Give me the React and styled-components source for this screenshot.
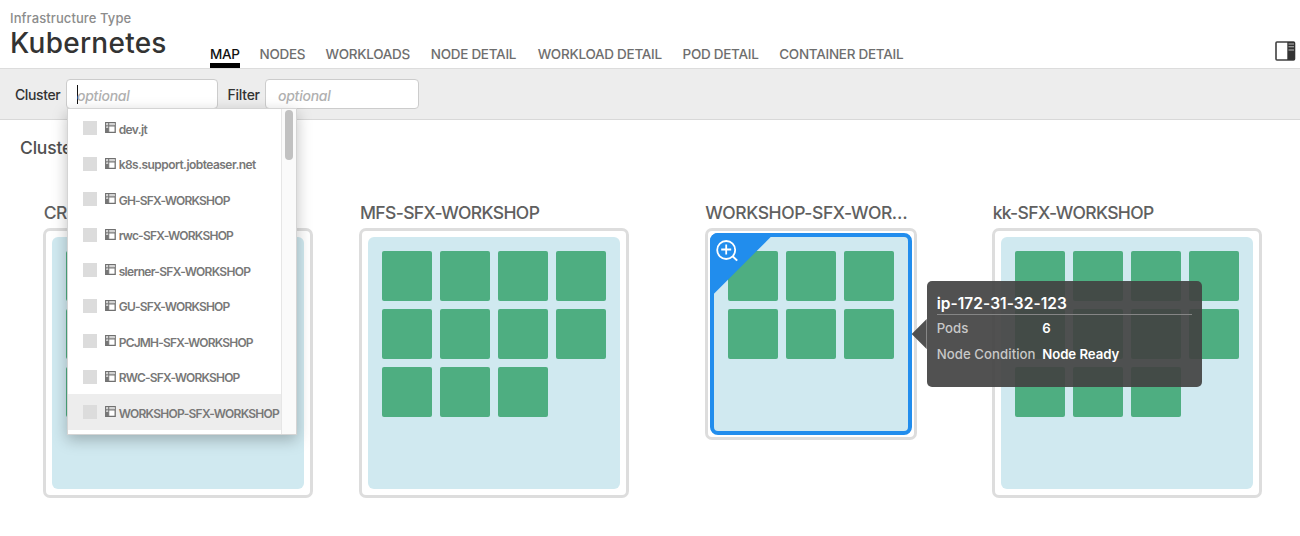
import React from "react";
import styled, { createGlobalStyle } from "styled-components";

const GlobalStyle = createGlobalStyle`
  * { box-sizing: border-box; }
  body {
    margin: 0;
    background: #fff;
    color: #333;
    font-family: Inter, "Liberation Sans", sans-serif;
    overflow: hidden;
  }
`;

const Page = styled.div`
  height: 536px;
  overflow: hidden;
`;

const Header = styled.header`
  display: flex;
  height: 69px;
  border-bottom: 1px solid #dcdcdc;
`;

const TitleBlock = styled.div`
  width: 210px;
  padding: 10px 0 0 10px;
`;

const Overline = styled.div`
  font-size: 13px;
  line-height: 16px;
  font-weight: 500;
  letter-spacing: 0.1px;
  color: #8c8c8c;
`;

const Title = styled.h1`
  margin: 0;
  font-size: 28px;
  line-height: 34px;
  font-weight: 500;
  letter-spacing: 0.25px;
  color: #333;
`;

const Tabs = styled.nav`
  display: flex;
  flex: 1;
  align-items: flex-end;
  gap: 20px;
  margin-right: -1px;
`;

const Tab = styled.a`
  width: ${(p) => p.$width}px;
  height: 24px;
  white-space: nowrap;
  font-size: 13.5px;
  line-height: 20px;
  font-weight: 500;
  letter-spacing: -0.27px;
  color: ${(p) => (p.$active ? "#111" : "#6e6e6e")};
  border-bottom: 5px solid ${(p) => (p.$active ? "#000" : "transparent")};
`;

const PanelButton = styled.button`
  align-self: flex-start;
  margin: 41px 4px 0 0;
  padding: 0;
  border: 0;
  background: none;
  line-height: 0;
`;

const FilterBar = styled.div`
  display: flex;
  align-items: center;
  height: 51px;
  padding-left: 15px;
  background: #ededed;
  border-bottom: 1px solid #d8d8d8;
`;

const Label = styled.label`
  width: ${(p) => p.$width}px;
  font-size: 14px;
  line-height: 20px;
  font-weight: 500;
  letter-spacing: ${(p) => p.$track}px;
  padding: 2px 0 0 ${(p) => p.$indent || 0}px;
`;

const Field = styled.div`
  position: relative;
  display: flex;
  align-items: center;
  width: ${(p) => p.$width}px;
  height: 30px;
  margin: 0 ${(p) => p.$after || 0}px 1px 0;
  padding: 3px 0 0 ${(p) => p.$indent}px;
  background: #fff;
  border: 1px solid #ccc;
  border-radius: 4px;
  font-size: 14px;
  font-style: italic;
  font-weight: 500;
  letter-spacing: -0.25px;
  color: #b0b0b0;
`;

const Caret = styled.span`
  width: 1px;
  height: 19px;
  margin: -2px -1px 0 0;
  background: #111;
`;

const Menu = styled.div`
  position: absolute;
  z-index: 2;
  top: 28px;
  left: 0;
  display: flex;
  width: 230px;
  height: 327px;
  overflow: hidden;
  background: #fff;
  border: 1px solid #d4d4d4;
  font-style: normal;
  box-shadow: 0 5px 14px rgba(0, 0, 0, 0.25);
`;

const MenuList = styled.div`
  flex: 1;
  min-width: 0;
  padding-top: 1.9px;
`;

const MenuRow = styled.div`
  display: flex;
  align-items: center;
  height: 35.5px;
  padding-left: 15px;
  background: ${(p) => (p.$active ? "#ededed" : "transparent")};
  white-space: nowrap;
  font-size: 12px;
  font-weight: 600;
  letter-spacing: ${(p) => p.$track}px;
  color: #787878;

  svg {
    flex: none;
    margin-top: -1px;
  }
`;

const Checkbox = styled.span`
  flex: none;
  width: 14px;
  height: 14px;
  margin-right: 8px;
  background: #dcdcdc;
`;

const RowText = styled.span`
  margin-left: 2.7px;
  padding-top: 2px;
`;

const ScrollTrack = styled.div`
  flex: none;
  width: 15px;
  padding: 1px 3px;
  background: #fafafa;
  border-left: 1px solid #e6e6e6;
`;

const ScrollThumb = styled.div`
  width: 8px;
  height: 50px;
  border-radius: 4px;
  background: #c1c1c1;
`;

const Heading = styled.h2`
  margin: 0;
  padding: 17px 0 0 20px;
  font-size: 17.5px;
  line-height: 22px;
  font-weight: 500;
  letter-spacing: -0.2px;
  color: #505050;
`;

const Map = styled.main`
  display: flex;
  justify-content: space-between;
  align-items: flex-start;
  padding: 43px 38px 0 43px;
`;

const Cluster = styled.section`
  display: flex;
  justify-content: center;
  width: 270px;
`;

const ClusterBody = styled.div`
  width: ${(p) => p.$cols * 58 + 38}px;
`;

const ClusterName = styled.h3`
  margin: 0 0 4px;
  padding-left: 0.7px;
  overflow: hidden;
  white-space: nowrap;
  font-size: 17.5px;
  line-height: 22px;
  font-weight: 500;
  letter-spacing: ${(p) => (p.$truncated ? -0.42 : -0.63)}px;
  color: #606060;
`;

const Frame = styled.div`
  padding: ${(p) => (p.$selected ? 2 : 6)}px;
  border: 3px solid #ddd;
  border-radius: 7px;
`;

const Node = styled.div`
  position: relative;
  display: grid;
  grid-template-columns: repeat(${(p) => p.$cols}, 50px);
  grid-auto-rows: 50px;
  gap: 8px;
  height: ${(p) => p.$cols * 58 + 20 + (p.$selected ? 8 : 0)}px;
  padding: 14px;
  border: ${(p) => (p.$selected ? 4 : 0)}px solid #218ded;
  border-radius: ${(p) => (p.$selected ? 8 : 6)}px;
  background: #d0e9f0;
`;

const Pod = styled.div`
  border-radius: 2px;
  background: #4eae81;
`;

const ZoomCorner = styled.div`
  position: absolute;
  top: -4px;
  left: -4px;
  width: 65px;
  height: 65px;
  padding: 6px;
  border-top-left-radius: 8px;
  background: #218ded;
  clip-path: polygon(0 0, 100% 0, 0 100%);
`;

const Tooltip = styled.aside`
  position: absolute;
  z-index: 3;
  top: 44px;
  left: 213px;
  width: 275px;
  height: 106px;
  padding: 13px 10px;
  border-radius: 5px;
  background: rgba(66, 66, 66, 0.92);
  color: #fff;

  &::before {
    content: "";
    position: absolute;
    top: 38px;
    right: 100%;
    width: 15px;
    height: 30px;
    background: inherit;
    clip-path: polygon(100% 0, 100% 100%, 0 50%);
  }
`;

const TooltipTitle = styled.div`
  height: 21px;
  font-size: 15.5px;
  line-height: 19px;
  font-weight: 600;
  letter-spacing: 0.05px;
  border-bottom: 1px solid #858585;
`;

const Facts = styled.dl`
  display: grid;
  grid-template-columns: 105.5px 1fr;
  grid-auto-rows: 26px;
  margin: 0;
  font-size: 13.2px;
  line-height: 26px;
  white-space: nowrap;

  dt { color: #c8c8c8; font-weight: 500; letter-spacing: 0.06px; }
  dd { margin: 0; font-weight: 600; letter-spacing: -0.03px; }
`;

const TableIcon = () => (
  <svg width="11" height="11" viewBox="0 0 11 11" fill="none">
    <path d="M.7 .7H10.2V10.3H.7Z" fill="#fff" stroke="#707070" strokeWidth="1.3" />
    <path d="M1 1.3H10V3.3H1Z" fill="#d2d2d2" />
    <path d="M1 6H3.5V10H1Z" fill="#777" />
    <path d="M1 3.9H10M3.7 1V10" stroke="#777" strokeWidth="1.1" />
    <path d="M1.4 5.2H3.1" stroke="#c4c4c4" strokeWidth="1.2" />
  </svg>
);

const PanelIcon = () => (
  <svg width="21" height="20" viewBox="0 0 21 20" fill="none">
    <rect x="1" y="1" width="18.5" height="18" rx="1" fill="#fff" stroke="#404040" strokeWidth="1.6" />
    <path d="M12.3 1H20V19H12.3Z" fill="#333" />
    <path d="M13.5 3H19M13.5 5.7H19M13.5 9H19" stroke="#bbb" strokeWidth="1.1" />
  </svg>
);

const ZoomIcon = () => (
  <svg width="23" height="23" viewBox="0 0 23 23" fill="none" stroke="#fff" strokeWidth="1.8">
    <circle cx="10.2" cy="11" r="9" />
    <path d="M5.2 10.5H15.2M10.2 5.5V15.5" />
    <path d="M16.6 17.2L21.2 21.6" strokeWidth="2" />
  </svg>
);

const tabs = [
  ["MAP", 29.5], ["NODES", 46], ["WORKLOADS", 85.2], ["NODE DETAIL", 87],
  ["WORKLOAD DETAIL", 124.8], ["POD DETAIL", 76.7], ["CONTAINER DETAIL", 126],
];

const options = [
  { name: "dev.jt", track: -0.6 },
  { name: "k8s.support.jobteaser.net", track: -0.54 },
  { name: "GH-SFX-WORKSHOP", track: -0.8 },
  { name: "rwc-SFX-WORKSHOP", track: -0.77 },
  { name: "slerner-SFX-WORKSHOP", track: -0.69 },
  { name: "GU-SFX-WORKSHOP", track: -0.8 },
  { name: "PCJMH-SFX-WORKSHOP", track: -0.8 },
  { name: "RWC-SFX-WORKSHOP", track: -0.8 },
  { name: "WORKSHOP-SFX-WORKSHOP", track: -0.73 },
];

const clusters = [
  { name: "CR-SFX-WORKSHOP", cols: 4, pods: 11 },
  { name: "MFS-SFX-WORKSHOP", cols: 4, pods: 11 },
  { name: "WORKSHOP-SFX-WOR…", cols: 3, pods: 6, selected: true },
  { name: "kk-SFX-WORKSHOP", cols: 4, pods: 11 },
];

export default function App() {
  return (
    <Page>
      <GlobalStyle />
      <Header>
        <TitleBlock>
          <Overline>Infrastructure Type</Overline>
          <Title>Kubernetes</Title>
        </TitleBlock>
        <Tabs>
          {tabs.map(([name, width], i) => (
            <Tab key={name} $width={width} $active={i === 0}>{name}</Tab>
          ))}
        </Tabs>
        <PanelButton aria-label="Toggle side panel"><PanelIcon /></PanelButton>
      </Header>
      <FilterBar>
        <Label $width={51} $track={-0.4}>Cluster</Label>
        <Field $width={152} $indent={10} $after={9}>
          <Caret />optional
          <Menu>
            <MenuList>
              {options.map(({ name, track }, i) => (
                <MenuRow key={name} $track={track} $active={i === 8}>
                  <Checkbox />
                  <TableIcon />
                  <RowText>{name}</RowText>
                </MenuRow>
              ))}
            </MenuList>
            <ScrollTrack><ScrollThumb /></ScrollTrack>
          </Menu>
        </Field>
        <Label $width={38} $indent={0.5} $track={-0.25}>Filter</Label>
        <Field $width={154} $indent={12}>optional</Field>
      </FilterBar>
      <Heading>Clusters</Heading>
      <Map>
        {clusters.map(({ name, cols, pods, selected }) => (
          <Cluster key={name}>
            <ClusterBody $cols={cols}>
              <ClusterName $truncated={selected}>{name}</ClusterName>
              <Frame $selected={selected}>
                <Node $cols={cols} $selected={selected}>
                  {Array.from({ length: pods }, (_, i) => <Pod key={i} />)}
                  {selected && (
                    <>
                      <ZoomCorner><ZoomIcon /></ZoomCorner>
                      <Tooltip>
                        <TooltipTitle>ip-172-31-32-123</TooltipTitle>
                        <Facts>
                          <dt>Pods</dt><dd>6</dd>
                          <dt>Node Condition</dt><dd>Node Ready</dd>
                        </Facts>
                      </Tooltip>
                    </>
                  )}
                </Node>
              </Frame>
            </ClusterBody>
          </Cluster>
        ))}
      </Map>
    </Page>
  );
}
